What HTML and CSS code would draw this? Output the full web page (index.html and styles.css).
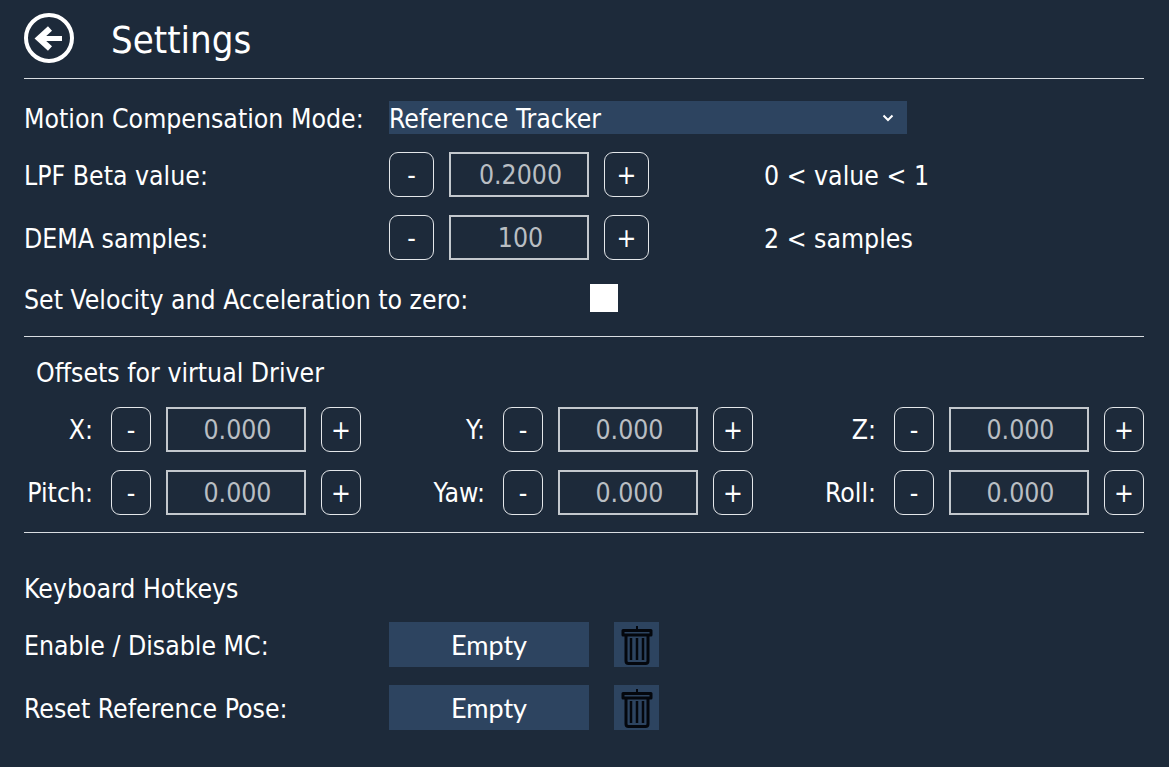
FILE: index.html
```html
<!DOCTYPE html>
<html lang="en">
<head>
<meta charset="utf-8">
<title>Settings</title>
<link rel="stylesheet" href="styles.css">
</head>
<body>
<main class="page">
  <header class="header">
    <button class="back" aria-label="Back">
      <svg width="50" height="50" viewBox="0 0 50 50"><circle cx="25" cy="25" r="23" fill="none" stroke="#fff" stroke-width="4"/><path d="M38 25.500H17" fill="none" stroke="#fff" stroke-width="5"/><path d="M26 15.500 15 25.500l11 10" fill="none" stroke="#fff" stroke-width="6"/></svg>
    </button>
    <h1 class="title">Settings</h1>
  </header>

  <section class="section section-main">
    <div class="row row-select">
      <span class="label">Motion Compensation Mode:</span>
      <div class="select"><span class="select-text">Reference Tracker</span>
        <svg class="chevron" width="12" height="8" viewBox="0 0 12 8"><path d="M1.500 1.500l4.500 4.500 4.500-4.500" fill="none" stroke="#fff" stroke-width="2"/></svg>
      </div>
    </div>
    <div class="row row-a">
      <span class="label">LPF Beta value:</span>
      <div class="stepper stepper-wide"><button class="step">-</button><div class="value">0.2000</div><button class="step">+</button></div>
      <span class="note">0 &lt; value &lt; 1</span>
    </div>
    <div class="row row-b">
      <span class="label">DEMA samples:</span>
      <div class="stepper stepper-wide"><button class="step">-</button><div class="value">100</div><button class="step">+</button></div>
      <span class="note">2 &lt; samples</span>
    </div>
    <div class="row row-check">
      <span class="label label-check">Set Velocity and Acceleration to zero:</span>
      <span class="checkbox"></span>
    </div>
  </section>

  <section class="section section-offsets">
    <h2 class="offset-title">Offsets for virtual Driver</h2>
    <div class="offset-grid">
      <div class="offset"><span class="axis">X:</span><div class="stepper"><button class="step">-</button><div class="value">0.000</div><button class="step">+</button></div></div>
      <div class="offset"><span class="axis">Y:</span><div class="stepper"><button class="step">-</button><div class="value">0.000</div><button class="step">+</button></div></div>
      <div class="offset"><span class="axis">Z:</span><div class="stepper"><button class="step">-</button><div class="value">0.000</div><button class="step">+</button></div></div>
      <div class="offset"><span class="axis">Pitch:</span><div class="stepper"><button class="step">-</button><div class="value">0.000</div><button class="step">+</button></div></div>
      <div class="offset"><span class="axis">Yaw:</span><div class="stepper"><button class="step">-</button><div class="value">0.000</div><button class="step">+</button></div></div>
      <div class="offset"><span class="axis">Roll:</span><div class="stepper"><button class="step">-</button><div class="value">0.000</div><button class="step">+</button></div></div>
    </div>
  </section>

  <section class="section-keys">
    <h2 class="keys-title">Keyboard Hotkeys</h2>
    <div class="row row-key">
      <span class="label">Enable / Disable MC:</span>
      <button class="key">Empty</button>
      <button class="trash" aria-label="Delete"><svg width="32" height="40" viewBox="0 0 32 40"><path d="M16 1v4" stroke="#04070d" stroke-width="2"/><path d="M2 5.500h28V10H2z" fill="none" stroke="#04070d" stroke-width="3" stroke-linejoin="round"/><path d="M5 10v26a2.500 2.500 0 0 0 2.500 2.500h17A2.500 2.500 0 0 0 27 36V10" fill="none" stroke="#04070d" stroke-width="3"/><path d="M10 13v22M16 13v22M22 13v22" stroke="#04070d" stroke-width="2.500"/></svg></button>
    </div>
    <div class="row row-key">
      <span class="label">Reset Reference Pose:</span>
      <button class="key">Empty</button>
      <button class="trash" aria-label="Delete"><svg width="32" height="40" viewBox="0 0 32 40"><path d="M16 1v4" stroke="#04070d" stroke-width="2"/><path d="M2 5.500h28V10H2z" fill="none" stroke="#04070d" stroke-width="3" stroke-linejoin="round"/><path d="M5 10v26a2.500 2.500 0 0 0 2.500 2.500h17A2.500 2.500 0 0 0 27 36V10" fill="none" stroke="#04070d" stroke-width="3"/><path d="M10 13v22M16 13v22M22 13v22" stroke="#04070d" stroke-width="2.500"/></svg></button>
    </div>
  </section>
</main>
</body>
</html>
```
FILE: styles.css
```css
* { box-sizing: border-box; }
html, body { margin: 0; height: 100%; }
body {
  background: #1d2a3a;
  color: #fff;
  font-family: "DejaVu Sans", "Liberation Sans", sans-serif;
  font-stretch: condensed;
  font-size: 26.400px;
  overflow: hidden;
}
button { font: inherit; color: inherit; background: none; padding: 0; margin: 0; border: 0; }
.page { width: 1120px; margin-left: 24px; height: 767px; }
.header {
  height: 79px;
  padding-top: 13px;
  display: flex;
  align-items: flex-start;
  border-bottom: 1px solid #d9dde2;
}
.back { width: 50px; height: 50px; display: block; }
.back svg { display: block; }
.title {
  margin: 2px 0 0 37px;
  height: 50px;
  line-height: 50px;
  font-size: 38px;
  font-weight: 400;
}
.section { border-bottom: 1px solid #d9dde2; }
.section-main { height: 258px; padding-top: 22px; }
.row { display: flex; align-items: center; }
.label { width: 365px; flex: none; line-height: 33px; padding-top: 2px; }
.row-select { height: 33px; }
.select {
  width: 518px;
  height: 33px;
  background: #2d4460;
  display: flex;
  align-items: center;
  justify-content: space-between;
  padding-right: 13px;
  line-height: 33px;
}
.select-text { padding-top: 2px; }
.chevron { display: block; }
.row-a { height: 45px; margin-top: 18px; }
.row-b { height: 45px; margin-top: 18px; }
.row-check { height: 28px; margin-top: 24px; }
.label-check { width: 566px; }
.checkbox { width: 28px; height: 28px; background: #fff; display: block; }
.note { margin-left: 115px; line-height: 45px; padding-top: 2px; }
.stepper { display: flex; gap: 15px; height: 45px; flex: none; }
.step {
  width: 40px;
  height: 45px;
  border: 1px solid #e4e7ea;
  border-radius: 9px;
  line-height: 41px;
  text-align: center;
  flex: none;
}
.stepper-wide .step { width: 45px; }
.value {
  width: 140px;
  height: 45px;
  border: 2px solid #c3c8cd;
  color: #b9bec3;
  text-align: center;
  line-height: 41px;
  padding-left: 3px;
}
.section-offsets { height: 196px; }
.offset-title {
  margin: 0;
  padding: 19px 0 0 12px;
  height: 70px;
  line-height: 33px;
  font-size: inherit;
  font-weight: 400;
}
.offset-grid {
  display: grid;
  grid-template-columns: 392px 391px 337px;
  row-gap: 18px;
}
.offset { display: flex; align-items: center; }
.offset .axis { width: 69px; text-align: right; margin-right: 18px; flex: none; }
.section-keys { padding-top: 39px; }
.keys-title {
  margin: 0;
  height: 33px;
  line-height: 33px;
  font-size: inherit;
  font-weight: 400;
}
.row-key { height: 45px; margin-top: 18px; }
.row-key:first-of-type { margin-top: 17px; }
.key {
  width: 200px;
  height: 45px;
  background: #2d4460;
  font-family: "Lato", sans-serif;
  font-stretch: normal;
  font-size: 27px;
  line-height: 45px;
  text-align: center;
}
.trash {
  width: 45px;
  height: 45px;
  margin-left: 25px;
  background: #2d4460;
  display: flex;
  align-items: center;
  justify-content: center;
}
.trash svg { display: block; }
```
